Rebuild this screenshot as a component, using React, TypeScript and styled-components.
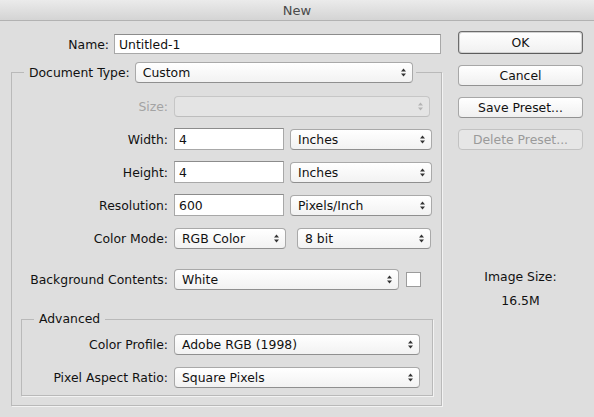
import { createGlobalStyle } from "styled-components";
import styled from "styled-components";

const GlobalStyle = createGlobalStyle`
  html, body {
    margin: 0;
    background: #dedede;
  }
  body {
    font-family: "DejaVu Sans", "Liberation Sans", sans-serif;
    font-size: 12.4px;
    color: #111111;
  }
`;

const Window = styled.div`
  width: 594px;
  height: 417px;
  overflow: hidden;
  display: flex;
  flex-direction: column;
  background: #dedede;
`;

const TitleBar = styled.div`
  height: 20px;
  flex-shrink: 0;
  border-bottom: 1px solid #b2b2b2;
  background: linear-gradient(#ebebeb, #d4d4d4);
  display: flex;
  align-items: center;
  justify-content: center;
  font-size: 13px;
  color: #4a4a4a;
`;

const Body = styled.div`
  display: flex;
  gap: 16px;
  padding: 10px 11px 0 11px;
`;

const LeftColumn = styled.div`
  width: 431px;
  display: flex;
  flex-direction: column;
`;

const RightColumn = styled.div`
  width: 125px;
  display: flex;
  flex-direction: column;
  gap: 11px;
`;

const NameRow = styled.div`
  display: flex;
  align-items: center;
  gap: 5px;
  margin-top: 3px;
`;

const Label = styled.span<{ $w?: number; $disabled?: boolean }>`
  ${(p) => (p.$w ? `width: ${p.$w}px;` : "")}
  flex-shrink: 0;
  text-align: right;
  white-space: nowrap;
  color: ${(p) => (p.$disabled ? "#a3a3a3" : "#111111")};
`;

const TextInput = styled.input<{ $w: number; $h?: number }>`
  box-sizing: border-box;
  width: ${(p) => p.$w}px;
  height: ${(p) => p.$h ?? 22}px;
  margin: 0;
  padding: 0 4px;
  border: 1px solid #a8a8a8;
  border-top-color: #8c8c8c;
  border-radius: 0;
  background: #ffffff;
  font: inherit;
  color: #111111;
  outline: none;
`;

const Group = styled.fieldset<{ $inset?: boolean }>`
  margin: ${(p) => (p.$inset ? "21px 8px 0 9px" : "8px 0 0 0")};
  padding: 0 0 ${(p) => (p.$inset ? 7 : 9)}px 0;
  min-width: 0;
  border: 1px solid #b9b9b9;
  box-shadow: 1px 1px 0 #f3f3f3;
`;

const Legend = styled.legend<{ $pr?: number }>`
  margin-left: 12px;
  padding: 0 ${(p) => p.$pr ?? 5}px 0 5px;
  line-height: 16px;
`;

const LegendInner = styled.span`
  display: flex;
  align-items: center;
  gap: 5px;
`;

const FormGrid = styled.div<{ $labelW: number; $pt: number }>`
  display: grid;
  grid-template-columns: ${(p) => p.$labelW}px 1fr;
  grid-auto-rows: 22px;
  column-gap: 6px;
  row-gap: 11px;
  align-items: center;
  padding-top: ${(p) => p.$pt}px;
`;

const Controls = styled.div<{ $gap?: number }>`
  display: flex;
  align-items: center;
  gap: ${(p) => p.$gap ?? 6}px;
`;

const SelectBox = styled.div<{ $w: number; $disabled?: boolean }>`
  box-sizing: border-box;
  width: ${(p) => p.$w}px;
  height: 21px;
  display: flex;
  align-items: center;
  justify-content: space-between;
  padding: 0 6px 0 7px;
  border: 1px solid ${(p) => (p.$disabled ? "#c6c6c6" : "#a9a9a9")};
  border-bottom-color: ${(p) => (p.$disabled ? "#bdbdbd" : "#8f8f8f")};
  border-radius: 4px;
  background: ${(p) =>
    p.$disabled ? "#e4e4e4" : "linear-gradient(#ffffff, #f2f2f2)"};
  color: #111111;
  white-space: nowrap;
`;

const Checkbox = styled.div`
  width: 15px;
  height: 15px;
  box-sizing: border-box;
  border: 1px solid #9c9c9c;
  background: #ffffff;
`;

const Button = styled.button<{ $default?: boolean; $tall?: boolean }>`
  box-sizing: border-box;
  width: 125px;
  height: ${(p) => (p.$tall ? 23 : 21)}px;
  margin: 0;
  padding: 0;
  border: 1px solid ${(p) => (p.$default ? "#6c6c6c" : "#a7a7a7")};
  border-bottom-color: ${(p) => (p.$default ? "#5c5c5c" : "#929292")};
  border-radius: 4px;
  background: linear-gradient(#ffffff, #f0f0f0);
  box-shadow: ${(p) => (p.$default ? "inset 0 0 0 1px #d2d2d2" : "none")};
  font: inherit;
  color: #111111;

  &:disabled {
    color: #9a9a9a;
    border-color: #c2c2c2;
    background: #e6e6e6;
  }
`;

const ImageSize = styled.div`
  margin-top: 108px;
  display: flex;
  flex-direction: column;
  align-items: center;
  gap: 8px;
  line-height: 16px;
`;

function Arrows({ disabled }: { disabled?: boolean }) {
  const c = disabled ? "#b4b4b4" : "#333333";
  return (
    <svg width="5" height="9" viewBox="0 0 5 9">
      <path d="M2.5 0.5 L5 3.5 L0 3.5 Z" fill={c} />
      <path d="M0 5.5 L5 5.5 L2.5 8.5 Z" fill={c} />
    </svg>
  );
}

function Select({ w, value, disabled }: { w: number; value?: string; disabled?: boolean }) {
  return (
    <SelectBox $w={w} $disabled={disabled}>
      <span>{value}</span>
      <Arrows disabled={disabled} />
    </SelectBox>
  );
}

export default function App() {
  return (
    <Window>
      <GlobalStyle />
      <TitleBar>New</TitleBar>
      <Body>
        <LeftColumn>
          <NameRow>
            <Label $w={98}>Name:</Label>
            <TextInput $w={327} $h={20} value="Untitled-1" readOnly />
          </NameRow>

          <Group>
            <Legend $pr={3}>
              <LegendInner>
                <Label>Document Type:</Label>
                <Select w={278} value="Custom" />
              </LegendInner>
            </Legend>

            <FormGrid $labelW={156} $pt={12}>
              <Label $disabled>Size:</Label>
              <Select w={256} disabled />

              <Label>Width:</Label>
              <Controls>
                <TextInput $w={110} value="4" readOnly />
                <Select w={142} value="Inches" />
              </Controls>

              <Label>Height:</Label>
              <Controls>
                <TextInput $w={110} value="4" readOnly />
                <Select w={142} value="Inches" />
              </Controls>

              <Label>Resolution:</Label>
              <Controls>
                <TextInput $w={110} value="600" readOnly />
                <Select w={142} value="Pixels/Inch" />
              </Controls>

              <Label>Color Mode:</Label>
              <Controls $gap={11}>
                <Select w={112} value="RGB Color" />
                <Select w={134} value="8 bit" />
              </Controls>
            </FormGrid>

            <FormGrid $labelW={156} $pt={19}>
              <Label>Background Contents:</Label>
              <Controls $gap={7}>
                <Select w={225} value="White" />
                <Checkbox />
              </Controls>
            </FormGrid>

            <Group $inset>
              <Legend>Advanced</Legend>
              <FormGrid $labelW={146} $pt={6}>
                <Label>Color Profile:</Label>
                <Select w={246} value="Adobe RGB (1998)" />

                <Label>Pixel Aspect Ratio:</Label>
                <Select w={246} value="Square Pixels" />
              </FormGrid>
            </Group>
          </Group>
        </LeftColumn>

        <RightColumn>
          <Button $default $tall>OK</Button>
          <Button>Cancel</Button>
          <Button>Save Preset...</Button>
          <Button disabled>Delete Preset...</Button>
          <ImageSize>
            <span>Image Size:</span>
            <span>16.5M</span>
          </ImageSize>
        </RightColumn>
      </Body>
    </Window>
  );
}
